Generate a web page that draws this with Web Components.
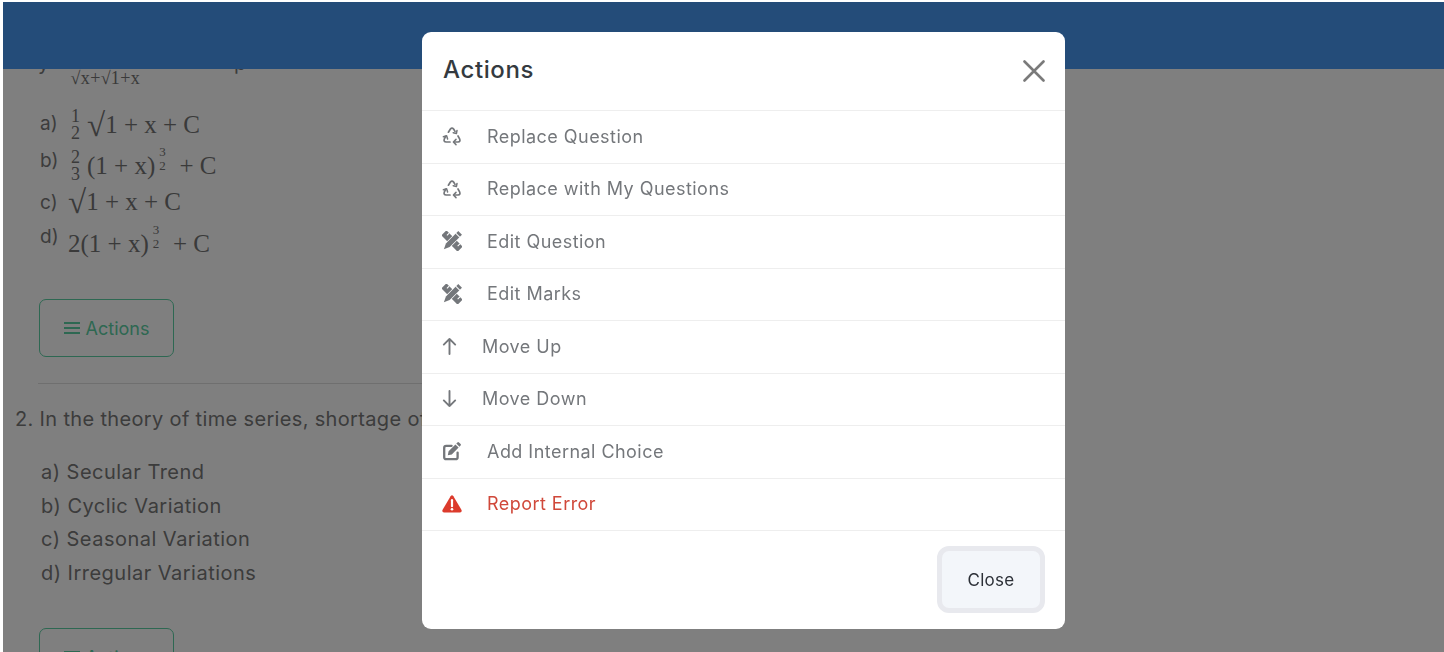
<!DOCTYPE html>
<html lang="en">
<head>
<meta charset="utf-8">
<title>Actions</title>
<style>
  html, body { margin: 0; height: 100%; background: #fff; overflow: hidden; }
  body { font-family: Inter, "Liberation Sans", sans-serif; }
  .serif { font-family: "Liberation Serif", serif; }
  .rad { font-size: 33px; line-height: 30px; }
</style>
</head>
<body>
<exam-page>
  <question-block>
    <div slot="stem" style="display:flex;height:30px;align-items:flex-end">
      <span style="margin-left:23px;font-size:20px;line-height:20px;margin-bottom:14px">y</span>
      <span class="serif" style="margin-left:21px;font-size:18px;line-height:22px;margin-bottom:-2px;color:#747474">√x+√1+x</span>
      <span style="margin-left:94px;font-size:20px;line-height:20px;margin-bottom:14px">p</span>
    </div>
    <math-option slot="options" label="a)" height="37" drop="-5"><math-frac top="1" bottom="2"></math-frac><span class="rad">√</span>1 + x + C</math-option>
    <math-option slot="options" label="b)" height="42" drop="-1"><math-frac top="2" bottom="3"></math-frac>(1 + x)<math-frac small top="3" bottom="2"></math-frac>&nbsp;+ C</math-option>
    <math-option slot="options" label="c)" height="34" drop="-7"><span class="rad">√</span>1 + x + C</math-option>
    <math-option slot="options" label="d)" height="41" drop="1">2(1 + x)<math-frac small top="3" bottom="2"></math-frac>&nbsp;+ C</math-option>
  </question-block>
  <question-block style="--stem-gap:23px;--button-gap:38px">
    <span slot="stem">2. In the theory of time series, shortage of</span>
    <text-option slot="options">a) Secular Trend</text-option>
    <text-option slot="options">b) Cyclic Variation</text-option>
    <text-option slot="options">c) Seasonal Variation</text-option>
    <text-option slot="options">d) Irregular Variations</text-option>
  </question-block>
</exam-page>

<actions-modal heading="Actions">
  <modal-item icon="recycle">Replace Question</modal-item>
  <modal-item icon="recycle">Replace with My Questions</modal-item>
  <modal-item icon="tools">Edit Question</modal-item>
  <modal-item icon="tools">Edit Marks</modal-item>
  <modal-item icon="up">Move Up</modal-item>
  <modal-item icon="down">Move Down</modal-item>
  <modal-item icon="edit">Add Internal Choice</modal-item>
  <modal-item icon="warn" danger>Report Error</modal-item>
</actions-modal>

<script>
  const ICONS = {
    recycle: `<svg width="20" height="20" viewBox="0 0 20 20" fill="none" stroke="currentColor" stroke-width="1.7" stroke-linejoin="round" stroke-linecap="round">
      <path d="M6.4 6.2 8.4 3Q10 1.2 11.6 3L13 5.4"/><path d="M15 4.4 14.4 7.6 11.2 6.8" stroke-width="1.5"/>
      <path d="M16 10 17.6 12.8Q18.8 15.8 16 16H12.4"/><path d="M14 13.4 11.4 16 14 18.6" stroke-width="1.5"/>
      <path d="M8 16H4.2Q1.2 15.8 2.4 12.8L3.6 10.4"/><path d="M1.4 10.8 4.6 9.8 5.6 13" stroke-width="1.5"/>
    </svg>`,
    tools: `<svg width="20" height="20" viewBox="0 0 20 20" fill="currentColor">
      <g transform="rotate(-45 10 10)"><rect x="6.4" y="-1.5" width="7.2" height="23" rx=".8"/>
      <path d="M10.4 2.4h3.2M10.4 17.6h3.2" stroke="#fff" stroke-width="1"/></g>
      <g transform="rotate(45 10 10)"><path d="M7.4-1.5h5.2v17.5L10 21.5 7.4 16z" stroke="#fff" stroke-width="1.3" paint-order="stroke"/><path d="M7 1.8h6" stroke="#fff" stroke-width="1"/></g>
    </svg>`,
    up: `<svg width="15" height="20" viewBox="0 0 15 20" fill="none" stroke="currentColor" stroke-width="1.9" stroke-linecap="round" stroke-linejoin="round"><path d="M7.5 18V3M1.8 8.6 7.5 2.9l5.7 5.7"/></svg>`,
    down: `<svg width="15" height="20" viewBox="0 0 15 20" fill="none" stroke="currentColor" stroke-width="1.9" stroke-linecap="round" stroke-linejoin="round"><path d="M7.5 2v15M1.8 11.4l5.7 5.7 5.7-5.7"/></svg>`,
    edit: `<svg width="20" height="20" viewBox="0 0 20 20">
      <path d="M15.6 11.6v4.6q0 2-2 2H4.2q-2 0-2-2V6.8q0-2 2-2h5.4" fill="none" stroke="currentColor" stroke-width="2.3" stroke-linecap="round"/>
      <path d="M15.4 1.4q.8-.8 1.6 0l1.6 1.6q.8.8 0 1.6l-1.1 1.1-3.2-3.2zM13.4 3.4l3.2 3.2-6.8 6.8-4 .8.8-4z" fill="currentColor"/>
    </svg>`,
    warn: `<svg width="20" height="20" viewBox="0 0 20 20">
      <path d="M8.6 2.2q1.4-2 2.8 0l8 13.6q1 2.2-1.4 2.6H2q-2.4-.4-1.4-2.6z" fill="currentColor"/>
      <path d="M10 6.2v6" stroke="#fff" stroke-width="2.2" stroke-linecap="round"/><circle cx="10" cy="15.2" r="1.3" fill="#fff"/>
    </svg>`,
  };

  class ExamPage extends HTMLElement {
    constructor() {
      super();
      this.attachShadow({ mode: "open" });
      this.shadowRoot.innerHTML = `
        <style>
          :host { display: flex; flex-direction: column; height: 650px; margin: 2px 0 0 3px; position: relative; overflow: hidden; }
          .bar { height: 67px; flex: none; background: #244c79; position: relative; z-index: 2; }
          .body { flex: 1; min-height: 0; overflow: hidden; padding: 0 0 0 12px; margin-top: -12px; color: #787878; font-size: 20px; }
          .shade { position: absolute; inset: 0; background: rgba(0, 0, 0, .5); z-index: 1; }
        </style>
        <div class="bar"></div>
        <div class="body"><slot></slot></div>
        <div class="shade"></div>`;
    }
  }

  class QuestionBlock extends HTMLElement {
    constructor() {
      super();
      this.attachShadow({ mode: "open" });
      this.shadowRoot.innerHTML = `
        <style>
          :host { display: block; white-space: nowrap; }
          .stem { line-height: 28px; letter-spacing: .34px; }
          .opts { margin: var(--stem-gap, 25px) 0 0 26px; }
          actions-button { margin: var(--button-gap, 33px) 0 0 24px; }
          .rule { width: 800px; height: 1px; margin: 26px 0 21px 23px; background: #dedede; }
        </style>
        <div class="stem"><slot name="stem"></slot></div>
        <div class="opts"><slot name="options"></slot></div>
        <actions-button></actions-button>
        <div class="rule"></div>`;
    }
  }

  class TextOption extends HTMLElement {
    constructor() {
      super();
      this.attachShadow({ mode: "open" });
      this.shadowRoot.innerHTML = `
        <style>:host { display: block; line-height: 33.6px; letter-spacing: .48px; }</style><slot></slot>`;
    }
  }

  class MathOption extends HTMLElement {
    constructor() {
      super();
      this.attachShadow({ mode: "open" });
      const drop = this.getAttribute("drop") || 0;
      this.shadowRoot.innerHTML = `
        <style>
          :host { display: flex; align-items: flex-start; height: ${this.getAttribute("height")}px; }
          .label { flex: none; width: 28px; margin-left: -1px; line-height: 24px; font-size: 19px; }
          .math { display: flex; align-items: center; height: 36px; margin-top: ${drop}px; font: 25px/36px "Liberation Serif", serif; color: #747474; white-space: pre; }
        </style>
        <span class="label">${this.getAttribute("label")}</span>
        <span class="math"><slot></slot></span>`;
    }
  }

  class MathFrac extends HTMLElement {
    constructor() {
      super();
      this.attachShadow({ mode: "open" });
      const small = this.hasAttribute("small");
      this.shadowRoot.innerHTML = `
        <style>
          :host { display: inline-flex; flex-direction: column; align-items: center; font-size: ${small ? 13 : 18}px; line-height: ${small ? 14 : 17}px; margin: ${small ? "-14px 6.5px 0 3px" : "0 6px 0 2px"}; }
          i { font-style: normal; display: block; padding: 0 1px; }
          i:first-child { border-bottom: 1px solid currentColor; }
        </style>
        <i>${this.getAttribute("top")}</i><i>${this.getAttribute("bottom")}</i>`;
    }
  }

  class ActionsButton extends HTMLElement {
    constructor() {
      super();
      this.attachShadow({ mode: "open" });
      this.shadowRoot.innerHTML = `
        <style>
          :host { display: flex; align-items: center; justify-content: center; gap: 6px; box-sizing: border-box; width: 135px; height: 58px; border: 1.5px solid #5cd0a4; border-radius: 7px; color: #5cd0a4; font-size: 18px; }
        </style>
        <svg width="16" height="14" viewBox="0 0 16 14" fill="none" stroke="currentColor" stroke-width="2"><path d="M0 2h16M0 7h16M0 12h16"/></svg>
        <span>Actions</span>`;
    }
  }

  class ActionsModal extends HTMLElement {
    constructor() {
      super();
      this.attachShadow({ mode: "open" });
      this.shadowRoot.innerHTML = `
        <style>
          :host { position: fixed; top: 32px; left: 422px; z-index: 10; display: flex; flex-direction: column; box-sizing: border-box; width: 643px; height: 597px; background: #fff; border-radius: 9px; color: #343a40; }
          header { display: flex; align-items: center; justify-content: space-between; flex: none; box-sizing: border-box; height: 79px; padding: 0 20px 0 21px; border-bottom: 1.5px solid #eeeeee; }
          h2 { margin: 0 0 2px; font-size: 24px; font-weight: 500; line-height: 1; letter-spacing: .6px; }
          footer { flex: 1; display: flex; justify-content: flex-end; align-items: flex-start; padding: 15px 20px 0 0; }
          button { box-sizing: border-box; width: 108px; height: 67px; border: 5px solid #e8e9ee; border-radius: 12px; background: #f3f6fa; color: #2b2f36; font: 17px Inter, "Liberation Sans", sans-serif; letter-spacing: .3px; padding: 0; }
        </style>
        <header>
          <h2>${this.getAttribute("heading")}</h2>
          <svg width="22" height="22" viewBox="0 0 22 22" fill="none" stroke="#7a7a7a" stroke-width="2.6" stroke-linecap="round"><path d="M1.5 1.5l19 19M20.5 1.5l-19 19"/></svg>
        </header>
        <slot></slot>
        <footer><button>Close</button></footer>`;
    }
  }

  class ModalItem extends HTMLElement {
    constructor() {
      super();
      this.attachShadow({ mode: "open" });
      this.shadowRoot.innerHTML = `
        <style>
          :host { display: flex; align-items: center; gap: 25px; box-sizing: border-box; flex: none; height: 52.5px; padding: 0 0 1px 20px; border-bottom: 1.5px solid #eeeeee; color: #74777b; font-size: 18px; letter-spacing: .46px; }
          :host([danger]) { color: #d0483a; }
          .icon { display: flex; flex: none; }
          :host([danger]) .icon { color: #dc3b2c; }
        </style>
        <span class="icon">${ICONS[this.getAttribute("icon")]}</span>
        <span><slot></slot></span>`;
    }
  }

  customElements.define("exam-page", ExamPage);
  customElements.define("question-block", QuestionBlock);
  customElements.define("text-option", TextOption);
  customElements.define("math-option", MathOption);
  customElements.define("math-frac", MathFrac);
  customElements.define("actions-button", ActionsButton);
  customElements.define("actions-modal", ActionsModal);
  customElements.define("modal-item", ModalItem);
</script>
</body>
</html>
